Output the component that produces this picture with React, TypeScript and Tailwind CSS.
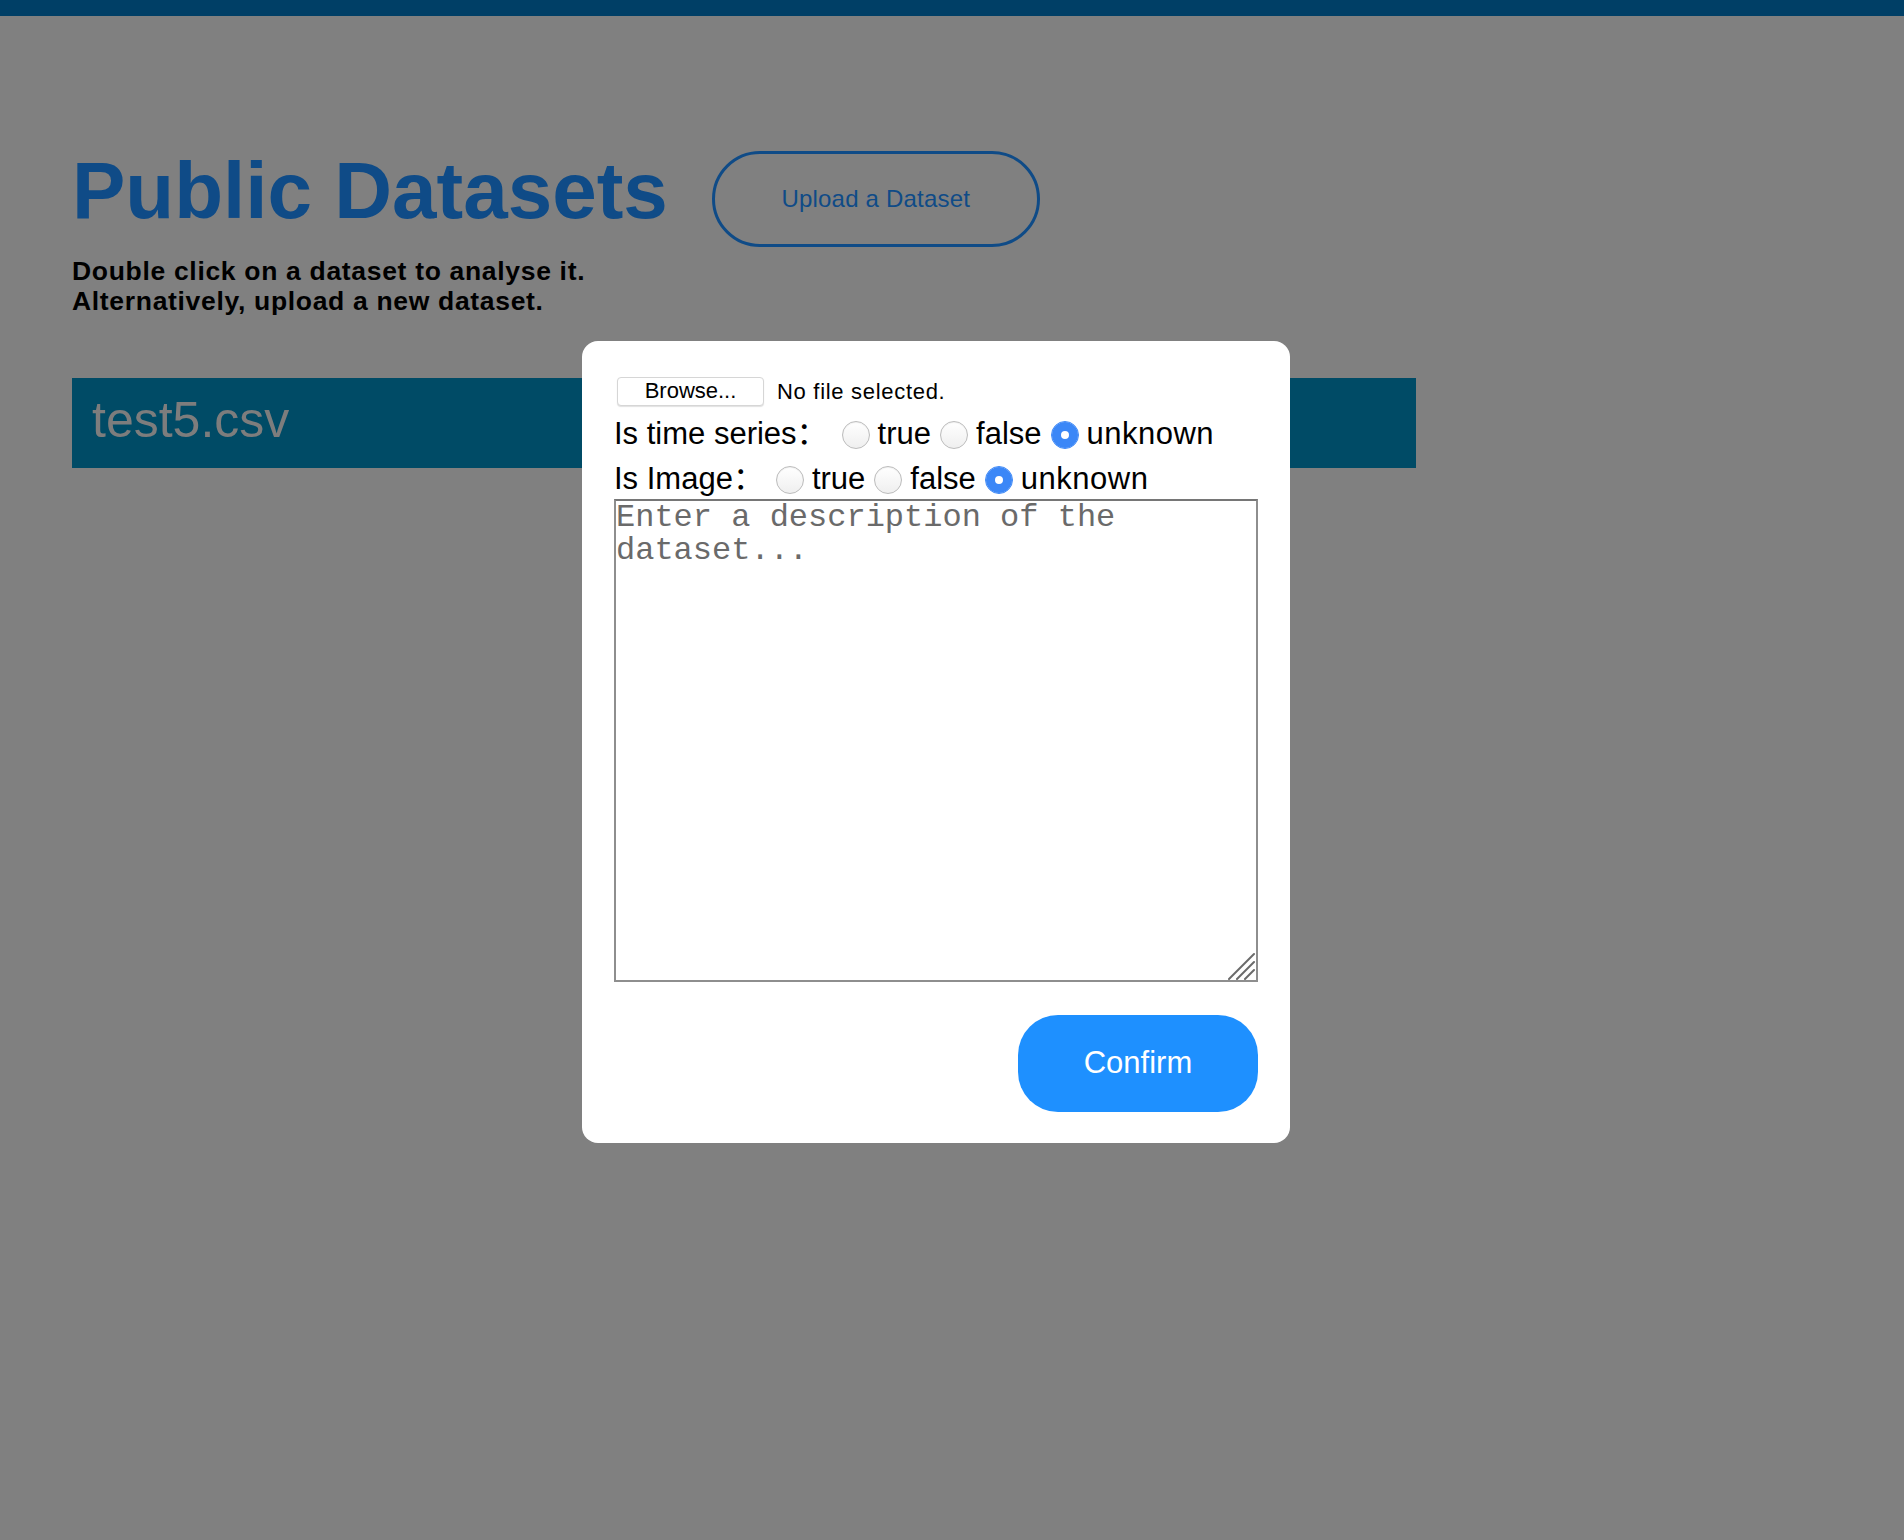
import React from "react";

function Radio({ name, checked, className = "" }: { name: string; checked?: boolean; className?: string }) {
  return (
    <input
      type="radio"
      name={name}
      defaultChecked={checked}
      className={
        "m-0 mt-[6px] h-[28px] w-[28px] shrink-0 appearance-none rounded-full border border-[#bcbcbc] bg-gradient-to-b from-white to-[#efefef] shadow-[inset_0_1px_1px_rgba(0,0,0,0.06)] checked:border-[#3b87f7] checked:bg-white checked:bg-none checked:shadow-[inset_0_0_0_9px_#3b87f7] " +
        className
      }
    />
  );
}

function RadioRow({ label, name, firstGap }: { label: string; name: string; firstGap: string }) {
  return (
    <div className="flex h-[45px] items-center text-[31px] text-black">
      <span className="mt-[5px] whitespace-nowrap">{label}</span>
      <Radio name={name} className={firstGap} />
      <span className="ml-[8px] mt-[5px]">true</span>
      <Radio name={name} className="ml-[9px]" />
      <span className="ml-[8px] mt-[5px]">false</span>
      <Radio name={name} checked className="ml-[9px]" />
      <span className="ml-[8px] mt-[5px] tracking-[0.5px]">unknown</span>
    </div>
  );
}

export default function App() {
  return (
    <div className="relative min-h-screen w-full bg-[#808080] font-['Liberation_Sans','Noto_Sans_CJK_SC',sans-serif]">
      <div className="h-[16px] bg-[#003f66]" />
      <main className="px-[72px] pt-[129px]">
        <div className="flex items-start gap-[44px]">
          <h1 className="text-[80px] font-bold leading-[91px] text-[#0f4b87]">Public Datasets</h1>
          <button className="mt-[6px] h-[96px] w-[328px] rounded-full border-[3px] border-[#0f4b87] text-[24px] tracking-[0.2px] text-[#0f4b87]">
            Upload a Dataset
          </button>
        </div>
        <p className="mt-[9px] text-[26.5px] font-bold leading-[30px] tracking-[0.68px] text-black">
          Double click on a dataset to analyse it.
          <br />
          Alternatively, upload a new dataset.
        </p>
        <div className="mt-[62px] h-[90px] w-[1344px] bg-[#004b66] pl-[20px] pt-[14px] text-[50px] leading-[57px] text-[#7d7d7d]">
          test5.csv
        </div>
      </main>

      <div className="absolute left-[582px] top-[341px] w-[708px] rounded-[16px] bg-white px-[32px] pb-[31px] pt-[32px]">
        <div className="flex h-[36px] items-center">
          <button className="ml-[3px] h-[29px] w-[147px] rounded-[4px] border border-[#d6d6d6] bg-white text-[22px] leading-none text-black shadow-[0_1px_1px_rgba(0,0,0,0.12)]">
            Browse...
          </button>
          <span className="ml-[13px] text-[22px] tracking-[0.7px] text-black">No file selected.</span>
        </div>
        <RadioRow label="Is time series：" name="ts" firstGap="ml-[14px]" />
        <RadioRow label="Is Image：" name="img" firstGap="ml-[12px]" />
        <div className="relative">
          <textarea
            className="block h-[483px] w-[644px] resize-none border-2 border-[#8e8e8e] border-t-[#767676] bg-white p-0 font-['Liberation_Mono',monospace] text-[32px] leading-[33px] text-black outline-none placeholder:text-[#6a6a6a]"
            placeholder="Enter a description of the dataset..."
          />
          <svg
            className="pointer-events-none absolute bottom-[2px] right-[2px] h-[28px] w-[28px]"
            viewBox="0 0 28 28"
            fill="none"
            stroke="#6a6a6a"
            strokeWidth="2"
            strokeLinecap="round"
          >
            <line x1="1" y1="27" x2="26" y2="2" />
            <line x1="9" y1="27" x2="26" y2="10" />
            <line x1="17" y1="27" x2="26" y2="18" />
          </svg>
        </div>
        <div className="mt-[33px] flex justify-end">
          <button className="h-[97px] w-[240px] rounded-[40px] bg-[#1e90ff] text-[31px] text-white">Confirm</button>
        </div>
      </div>
    </div>
  );
}
